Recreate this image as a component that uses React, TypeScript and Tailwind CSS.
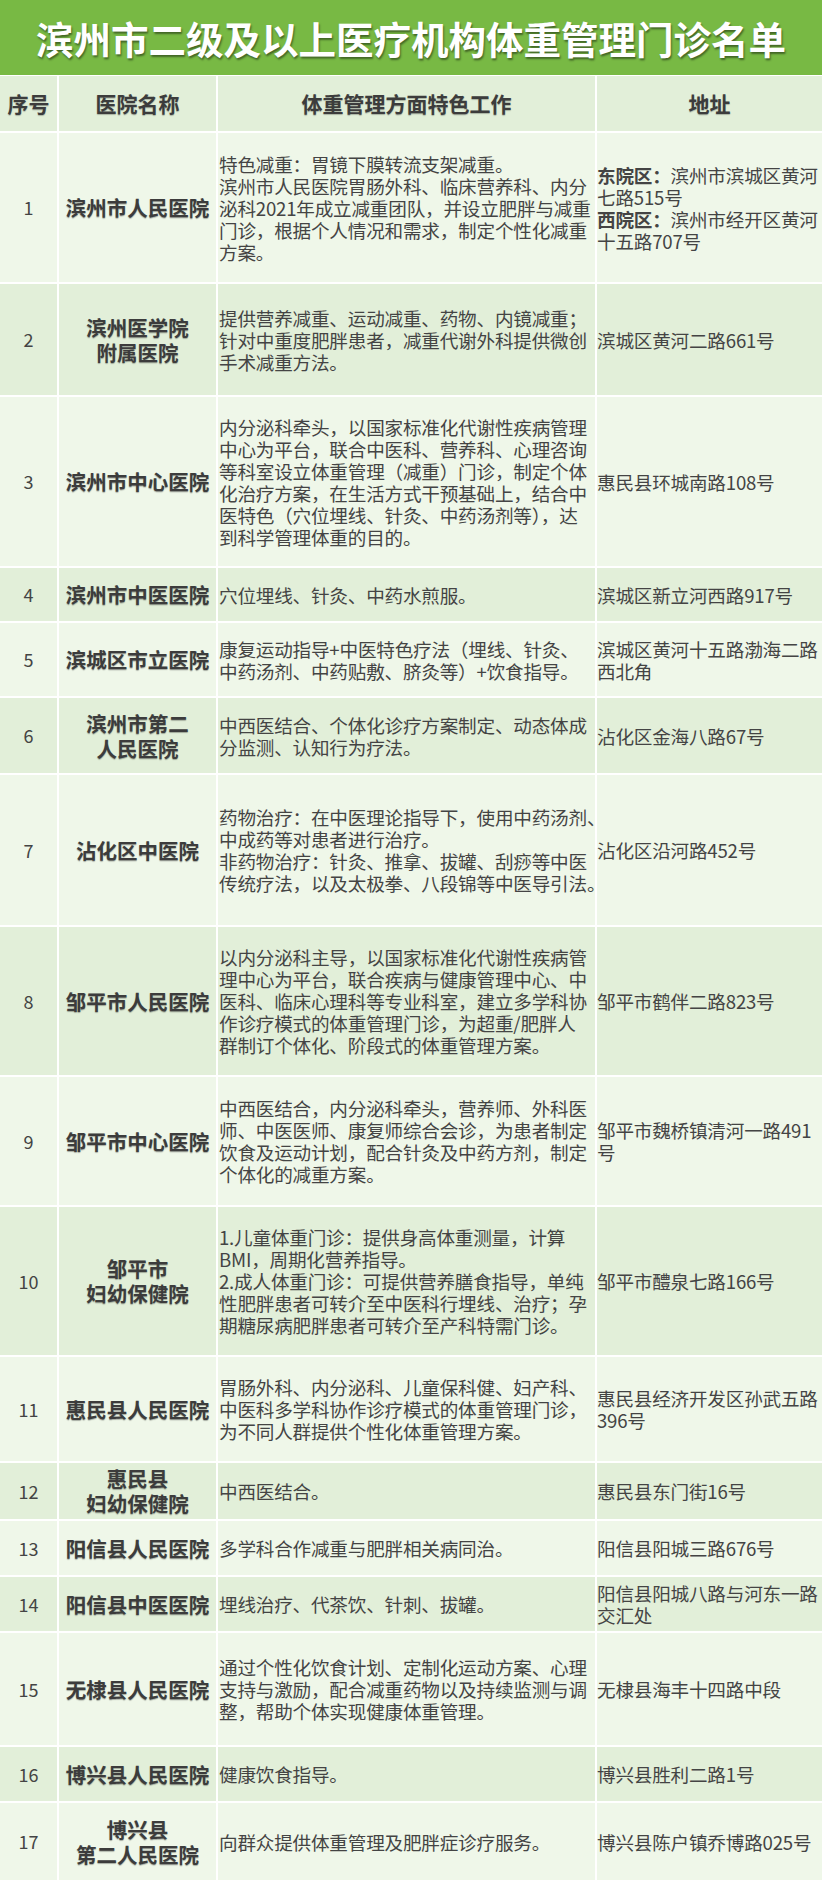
import React from "react";

type Row = {
  no: number;
  name: string[];
  detail: string[];
  addr: React.ReactNode[];
  h: number;
};

const ROWS: Row[] = [
  {
    no: 1,
    name: ["滨州市人民医院"],
    detail: [
      "特色减重：胃镜下膜转流支架减重。",
      "滨州市人民医院胃肠外科、临床营养科、内分",
      "泌科2021年成立减重团队，并设立肥胖与减重",
      "门诊，根据个人情况和需求，制定个性化减重",
      "方案。",
    ],
    addr: [
      <>
        <b className="font-bold">东院区：</b>滨州市滨城区黄河
      </>,
      "七路515号",
      <>
        <b className="font-bold">西院区：</b>滨州市经开区黄河
      </>,
      "十五路707号",
    ],
    h: 149,
  },
  {
    no: 2,
    name: ["滨州医学院", "附属医院"],
    detail: [
      "提供营养减重、运动减重、药物、内镜减重；",
      "针对中重度肥胖患者，减重代谢外科提供微创",
      "手术减重方法。",
    ],
    addr: ["滨城区黄河二路661号"],
    h: 111,
  },
  {
    no: 3,
    name: ["滨州市中心医院"],
    detail: [
      "内分泌科牵头，以国家标准化代谢性疾病管理",
      "中心为平台，联合中医科、营养科、心理咨询",
      "等科室设立体重管理（减重）门诊，制定个体",
      "化治疗方案，在生活方式干预基础上，结合中",
      "医特色（穴位埋线、针灸、中药汤剂等），达",
      "到科学管理体重的目的。",
    ],
    addr: ["惠民县环城南路108号"],
    h: 169,
  },
  {
    no: 4,
    name: ["滨州市中医医院"],
    detail: ["穴位埋线、针灸、中药水煎服。"],
    addr: ["滨城区新立河西路917号"],
    h: 53,
  },
  {
    no: 5,
    name: ["滨城区市立医院"],
    detail: [
      "康复运动指导+中医特色疗法（埋线、针灸、",
      "中药汤剂、中药贴敷、脐灸等）+饮食指导。",
    ],
    addr: ["滨城区黄河十五路渤海二路", "西北角"],
    h: 73,
  },
  {
    no: 6,
    name: ["滨州市第二", "人民医院"],
    detail: ["中西医结合、个体化诊疗方案制定、动态体成", "分监测、认知行为疗法。"],
    addr: ["沾化区金海八路67号"],
    h: 75,
  },
  {
    no: 7,
    name: ["沾化区中医院"],
    detail: [
      "药物治疗：在中医理论指导下，使用中药汤剂、",
      "中成药等对患者进行治疗。",
      "非药物治疗：针灸、推拿、拔罐、刮痧等中医",
      "传统疗法，以及太极拳、八段锦等中医导引法。",
    ],
    addr: ["沾化区沿河路452号"],
    h: 150,
  },
  {
    no: 8,
    name: ["邹平市人民医院"],
    detail: [
      "以内分泌科主导，以国家标准化代谢性疾病管",
      "理中心为平台，联合疾病与健康管理中心、中",
      "医科、临床心理科等专业科室，建立多学科协",
      "作诊疗模式的体重管理门诊，为超重/肥胖人",
      "群制订个体化、阶段式的体重管理方案。",
    ],
    addr: ["邹平市鹤伴二路823号"],
    h: 148,
  },
  {
    no: 9,
    name: ["邹平市中心医院"],
    detail: [
      "中西医结合，内分泌科牵头，营养师、外科医",
      "师、中医医师、康复师综合会诊，为患者制定",
      "饮食及运动计划，配合针灸及中药方剂，制定",
      "个体化的减重方案。",
    ],
    addr: ["邹平市魏桥镇清河一路491", "号"],
    h: 128,
  },
  {
    no: 10,
    name: ["邹平市", "妇幼保健院"],
    detail: [
      "1.儿童体重门诊：提供身高体重测量，计算",
      "BMI，周期化营养指导。",
      "2.成人体重门诊：可提供营养膳食指导，单纯",
      "性肥胖患者可转介至中医科行埋线、治疗；孕",
      "期糖尿病肥胖患者可转介至产科特需门诊。",
    ],
    addr: ["邹平市醴泉七路166号"],
    h: 148,
  },
  {
    no: 11,
    name: ["惠民县人民医院"],
    detail: [
      "胃肠外科、内分泌科、儿童保科健、妇产科、",
      "中医科多学科协作诊疗模式的体重管理门诊，",
      "为不同人群提供个性化体重管理方案。",
    ],
    addr: ["惠民县经济开发区孙武五路", "396号"],
    h: 104,
  },
  {
    no: 12,
    name: ["惠民县", "妇幼保健院"],
    detail: ["中西医结合。"],
    addr: ["惠民县东门街16号"],
    h: 56,
  },
  {
    no: 13,
    name: ["阳信县人民医院"],
    detail: ["多学科合作减重与肥胖相关病同治。"],
    addr: ["阳信县阳城三路676号"],
    h: 54,
  },
  {
    no: 14,
    name: ["阳信县中医医院"],
    detail: ["埋线治疗、代茶饮、针刺、拔罐。"],
    addr: ["阳信县阳城八路与河东一路", "交汇处"],
    h: 54,
  },
  {
    no: 15,
    name: ["无棣县人民医院"],
    detail: [
      "通过个性化饮食计划、定制化运动方案、心理",
      "支持与激励，配合减重药物以及持续监测与调",
      "整，帮助个体实现健康体重管理。",
    ],
    addr: ["无棣县海丰十四路中段"],
    h: 112,
  },
  {
    no: 16,
    name: ["博兴县人民医院"],
    detail: ["健康饮食指导。"],
    addr: ["博兴县胜利二路1号"],
    h: 54,
  },
  {
    no: 17,
    name: ["博兴县", "第二人民医院"],
    detail: ["向群众提供体重管理及肥胖症诊疗服务。"],
    addr: ["博兴县陈户镇乔博路025号"],
    h: 77,
  },
];

const font = "font-['Noto_Sans_CJK_SC','Noto_Sans',sans-serif]";

function Lines({ items }: { items: React.ReactNode[] }) {
  return (
    <div className="flex flex-col">
      {items.map((l, i) => (
        <span key={i} className="whitespace-nowrap">
          {l}
        </span>
      ))}
    </div>
  );
}

function TableRow({ row }: { row: Row }) {
  const bg = row.no % 2 === 1 ? "bg-[#eff7e9]" : "bg-[#e2efd9]";
  const cell = `${bg} flex items-center overflow-hidden`;
  return (
    <>
      <div className={`${cell} justify-center text-[18px] text-[#444]`} style={{ height: row.h }}>
        {row.no}
      </div>
      <div
        className={`${cell} justify-center text-center text-[20.5px] font-bold leading-[25px] text-[#3c3c3c] [text-shadow:0_1px_1px_rgba(0,0,0,0.3)]`}
      >
        <Lines items={row.name} />
      </div>
      <div className={`${cell} pl-[1px] text-[18.6px] leading-[22px] tracking-[-0.2px] text-[#444]`}>
        <Lines items={row.detail} />
      </div>
      <div className={`${cell} text-[18.6px] leading-[22px] tracking-[-0.2px] text-[#444]`}>
        <Lines items={row.addr} />
      </div>
    </>
  );
}

export default function App() {
  return (
    <div className={`${font} w-[822px] bg-white`}>
      <div className="flex h-[75px] items-center justify-center bg-[#78b944]">
        <h1 className="whitespace-nowrap text-[37.5px] font-bold leading-none text-white [text-shadow:1px_2px_2px_rgba(0,0,0,0.45)]">
          滨州市二级及以上医疗机构体重管理门诊名单
        </h1>
      </div>
      <div className="grid grid-cols-[57px_157px_377px_225px] gap-[2px] bg-white pt-[1px]">
        {["序号", "医院名称", "体重管理方面特色工作", "地址"].map((t) => (
          <div
            key={t}
            className="flex h-[55px] items-center justify-center bg-[#e2efd9] text-[21px] font-bold text-[#3c3c3c] [text-shadow:0_1px_1px_rgba(0,0,0,0.25)]"
          >
            {t}
          </div>
        ))}
        {ROWS.map((r) => (
          <TableRow key={r.no} row={r} />
        ))}
      </div>
    </div>
  );
}
